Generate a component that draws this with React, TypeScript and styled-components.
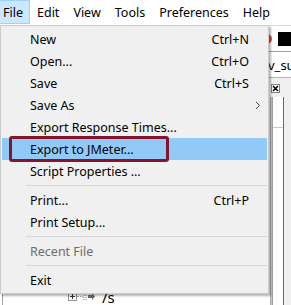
import styled, { createGlobalStyle } from "styled-components";

const GlobalStyle = createGlobalStyle`
  html, body {
    margin: 0;
    padding: 0;
    background: #fff;
    overflow: hidden;
  }
  body {
    font-family: "Noto Sans", "Open Sans", sans-serif;
  }
`;

const Window = styled.div`
  position: relative;
  width: 291px;
  height: 305px;
  display: flex;
  flex-direction: column;
  background: #fff;
  overflow: hidden;
  color: #000;
  font-size: 12.5px;
`;

const MenuBar = styled.div`
  height: 25px;
  flex: none;
  display: flex;
  margin-left: -4px;
  background: #fff;
`;

const MenuTitle = styled.div<{ $open?: boolean }>`
  height: 24px;
  box-sizing: border-box;
  display: flex;
  align-items: center;
  padding: 0 6px;
  border: 1px solid ${(p) => (p.$open ? "#99d1ff" : "transparent")};
  background: ${(p) => (p.$open ? "#cce8ff" : "transparent")};
  white-space: nowrap;
`;

const Toolbar = styled.div`
  height: 27px;
  flex: none;
  box-sizing: border-box;
  display: flex;
  align-items: center;
  gap: 6px;
  padding-left: 262px;
  border-bottom: 1px solid #a0a0a0;
  border-top: 1px solid #d8d8d8;
`;

const RecordDot = styled.div`
  width: 10px;
  height: 10px;
  flex: none;
  border-radius: 50%;
  background: #e2502c;
`;

const StopSquare = styled.div`
  width: 15px;
  height: 14px;
  flex: none;
  background: #000;
`;

const AddressRow = styled.div`
  height: 26px;
  flex: none;
  box-sizing: border-box;
  display: flex;
  align-items: center;
  padding-left: 268px;
  border-bottom: 1px solid #b4b4b4;
  white-space: nowrap;
  overflow: hidden;
  font-size: 13px;
`;

const Panes = styled.div`
  flex: 1;
  display: flex;
  min-height: 0;
`;

const TreePane = styled.div`
  flex: 1;
  margin-left: 2px;
  border-left: 1px solid #a0a0a0;
  padding-top: 209px;
  overflow: hidden;
`;

const TreeRow = styled.div<{ $level: number }>`
  height: 19px;
  display: flex;
  align-items: center;
  padding-left: ${(p) => 1 + p.$level * 16}px;
  white-space: nowrap;
`;

const Expander = styled.div`
  width: 9px;
  height: 9px;
  flex: none;
  box-sizing: border-box;
  border: 1px solid #919191;
  background: #fff;
  display: flex;
  align-items: center;
  justify-content: center;
`;

const Dots = styled.div`
  width: 6px;
  flex: none;
  border-top: 1px dotted #a0a0a0;
`;

const NodeLabel = styled.span`
  margin-left: 6px;
  font-size: 15px;
`;

const SidePane = styled.div`
  width: 21px;
  flex: none;
  display: flex;
  flex-direction: column;
  background: #f0f0f0;
`;

const SideHeader = styled.div`
  height: 19px;
  flex: none;
  display: flex;
  align-items: center;
  padding-left: 1px;
`;

const CloseButton = styled.div`
  width: 9px;
  height: 9px;
  box-sizing: border-box;
  border: 1px solid #808080;
  background: #fff;
  display: flex;
  align-items: center;
  justify-content: center;
  margin-top: 1px;
`;

const SideBody = styled.div`
  flex: 1;
  display: flex;
`;

const Splitter = styled.div`
  width: 3px;
  flex: none;
  background: linear-gradient(to right, #9a9a9a, #c8c8c8, #8c8c8c);
`;

const Frame = styled.div`
  width: 10px;
  flex: none;
  display: flex;
  flex-direction: column;
  background: #fff;
  border-right: 1px solid #6a6a6a;
`;

const FrameTop = styled.div`
  height: 30px;
  border-bottom: 1px solid #c8c8c8;
`;

const Dropdown = styled.div`
  position: absolute;
  left: 0;
  top: 25px;
  width: 269px;
  box-sizing: border-box;
  padding: 2px 1px;
  background: #f0f0f0;
  border: 1px solid #cccccc;
  box-shadow: 2px 2px 2px rgba(0, 0, 0, 0.3);
`;

const Item = styled.div<{ $active?: boolean; $disabled?: boolean }>`
  height: 22px;
  display: grid;
  grid-template-columns: 1fr auto 18px;
  align-items: center;
  padding-left: 28px;
  background: ${(p) => (p.$active ? "#91c9f7" : "transparent")};
  color: ${(p) => (p.$disabled ? "#6d6d6d" : "#000")};
  white-space: nowrap;
`;

const Shortcut = styled.span`
  text-align: right;
`;

const SubArrow = styled.span`
  display: flex;
  justify-content: center;
`;

const Separator = styled.div`
  height: 7px;
  margin-left: 24px;
  display: flex;
  align-items: center;
  &::after {
    content: "";
    flex: 1;
    height: 1px;
    background: #d7d7d7;
  }
`;

const Callout = styled.div`
  position: absolute;
  left: 9px;
  top: 136px;
  width: 160px;
  height: 26px;
  box-sizing: border-box;
  border: 3px solid #84152c;
  border-radius: 3px;
`;

type Entry =
  | { kind: "item"; label: string; shortcut?: string; sub?: boolean; active?: boolean; disabled?: boolean }
  | { kind: "sep" };

const entries: Entry[] = [
  { kind: "item", label: "New", shortcut: "Ctrl+N" },
  { kind: "item", label: "Open...", shortcut: "Ctrl+O" },
  { kind: "item", label: "Save", shortcut: "Ctrl+S" },
  { kind: "item", label: "Save As", sub: true },
  { kind: "item", label: "Export Response Times..." },
  { kind: "item", label: "Export to JMeter...", active: true },
  { kind: "item", label: "Script Properties ..." },
  { kind: "sep" },
  { kind: "item", label: "Print...", shortcut: "Ctrl+P" },
  { kind: "item", label: "Print Setup..." },
  { kind: "sep" },
  { kind: "item", label: "Recent File", disabled: true },
  { kind: "sep" },
  { kind: "item", label: "Exit" },
];

const menus = ["File", "Edit", "View", "Tools", "Preferences", "Help"];

const treeNodes = [{ level: 4, label: "/s" }];

function PlusIcon() {
  return (
    <svg width="7" height="7" viewBox="0 0 7 7">
      <path d="M1 3.5H6M3.5 1V6" stroke="#333" strokeWidth="1" />
    </svg>
  );
}

function RequestIcon() {
  return (
    <svg width="13" height="11" viewBox="0 0 13 11">
      <path d="M1 2V9M3 2V9" stroke="#9a9a9a" strokeWidth="1" strokeDasharray="1 1" />
      <path d="M5 4H9V2L12 5.5L9 9V7H5Z" fill="#6a6a6a" />
    </svg>
  );
}

export default function App() {
  return (
    <>
      <GlobalStyle />
      <Window>
        <MenuBar>
          {menus.map((m) => (
            <MenuTitle key={m} $open={m === "File"}>
              {m}
            </MenuTitle>
          ))}
        </MenuBar>
        <Toolbar>
          <RecordDot />
          <StopSquare />
        </Toolbar>
        <AddressRow>v_suite</AddressRow>
        <Panes>
          <TreePane>
            {treeNodes.map((n, i) => (
              <TreeRow key={i} $level={n.level}>
                <Expander>
                  <PlusIcon />
                </Expander>
                <Dots />
                <RequestIcon />
                <NodeLabel>{n.label}</NodeLabel>
              </TreeRow>
            ))}
          </TreePane>
          <SidePane>
            <SideHeader>
              <CloseButton>
                <svg width="7" height="7" viewBox="0 0 7 7">
                  <path d="M1 1L6 6M6 1L1 6" stroke="#000" strokeWidth="1.6" />
                </svg>
              </CloseButton>
            </SideHeader>
            <SideBody>
              <Splitter />
              <Frame>
                <FrameTop />
              </Frame>
            </SideBody>
          </SidePane>
        </Panes>

        <Dropdown>
          {entries.map((e, i) =>
            e.kind === "sep" ? (
              <Separator key={i} />
            ) : (
              <Item key={i} $active={e.active} $disabled={e.disabled}>
                <span>{e.label}</span>
                <Shortcut>{e.shortcut}</Shortcut>
                <SubArrow>
                  {e.sub && (
                    <svg width="6" height="9" viewBox="0 0 6 9">
                      <path d="M1 1L4.5 4.5L1 8" fill="none" stroke="#444" strokeWidth="1" />
                    </svg>
                  )}
                </SubArrow>
              </Item>
            )
          )}
        </Dropdown>
        <Callout />
      </Window>
    </>
  );
}
